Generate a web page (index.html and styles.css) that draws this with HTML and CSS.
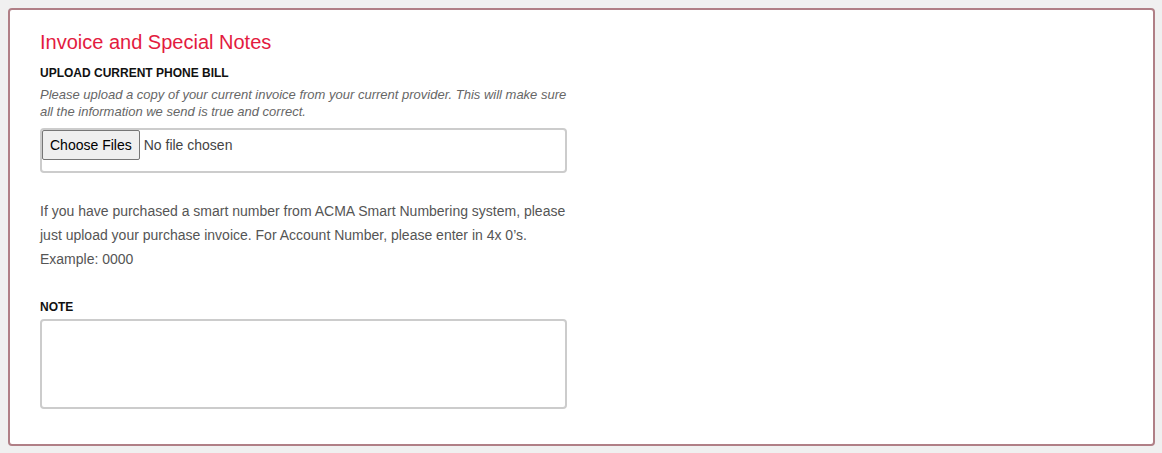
FILE: index.html
```html
<!DOCTYPE html>
<html>
<head>
<meta charset="utf-8">
<link rel="stylesheet" href="styles.css">
</head>
<body>
<section class="card">
  <div class="col">
    <h2 class="title">Invoice and Special Notes</h2>
    <div class="label">UPLOAD CURRENT PHONE BILL</div>
    <p class="hint">Please upload a copy of your current invoice from your current provider. This will make sure all the information we send is true and correct.</p>
    <div class="file">
      <span class="file-btn">Choose Files</span>
      <span class="file-name">No file chosen</span>
    </div>
    <p class="info">If you have purchased a smart number from ACMA Smart Numbering system, please just upload your purchase invoice. For Account Number, please enter in 4x 0’s. Example: 0000</p>
    <div class="label note-label">NOTE</div>
    <textarea class="note"></textarea>
  </div>
</section>
</body>
</html>
```
FILE: styles.css
```css
html, body {
  margin: 0;
  padding: 0;
  background: #f0f0f0;
  font-family: "Liberation Sans", Arial, sans-serif;
}
body {
  padding: 8px 7px 7px 8px;
}
.card {
  background: #fff;
  border: 2px solid #b07f86;
  border-radius: 4px;
  height: 438px;
  box-sizing: border-box;
  padding: 20px 30px;
}
.col {
  width: 527px;
}
.title {
  margin: 0;
  font-size: 20px;
  font-weight: normal;
  line-height: 24px;
  color: #e31b3f;
}
.label {
  margin-top: 12px;
  font-size: 12px;
  font-weight: bold;
  color: #111;
  line-height: 14px;
}
.hint {
  margin: 6px 0 0;
  font-size: 13px;
  font-style: italic;
  color: #666;
  line-height: 17px;
}
.file {
  margin-top: 8px;
  height: 45px;
  box-sizing: border-box;
  border: 2px solid #ccc;
  border-radius: 4px;
  display: flex;
  align-items: flex-start;
  gap: 4px;
}
.file-btn {
  box-sizing: border-box;
  height: 30px;
  padding: 0 7px;
  display: flex;
  align-items: center;
  font-size: 14px;
  color: #000;
  background: #efefef;
  border: 1px solid #767676;
  border-radius: 2px;
}
.file-name {
  font-size: 14px;
  line-height: 30px;
  color: #444;
}
.info {
  margin: 26px 0 0;
  font-size: 14px;
  line-height: 24px;
  color: #555;
}
.note-label {
  margin-top: 29px;
}
.note {
  display: block;
  margin-top: 5px;
  width: 527px;
  height: 90px;
  box-sizing: border-box;
  border: 2px solid #ccc;
  border-radius: 4px;
  resize: none;
  font-family: inherit;
}
```
